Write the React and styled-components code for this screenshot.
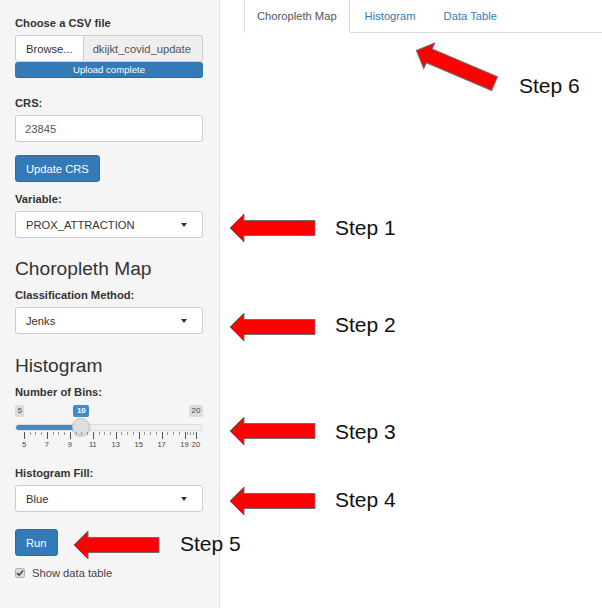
import React from "react";
import styled, { createGlobalStyle } from "styled-components";

const GlobalStyle = createGlobalStyle`
  html, body {
    margin: 0;
    padding: 0;
    background: #fff;
  }
  body {
    font-family: "Liberation Sans", Arial, Helvetica, sans-serif;
    color: #333;
  }
`;

const BLUE = "#337ab7";
const SLIDER_BLUE = "#428bca";

// slider data
const MIN = 5;
const MAX = 20;
const VALUE = 10;
const GRID_LEFT = 9;
const GRID_WIDTH = 172;
const gridX = (v) => GRID_LEFT + ((v - MIN) / (MAX - MIN)) * GRID_WIDTH;
const gridLabels = [5, 7, 9, 11, 13, 15, 17, 19, 20];
const smallTicks = [];
for (let v = 5; v < 19; v += 2) {
  smallTicks.push(v + 0.5, v + 1, v + 1.5);
}
smallTicks.push(19.25, 19.5, 19.75);

const annotations = [
  { id: 1, arrow: { x: 229, y: 213 }, text: { x: 335, y: 216 } },
  { id: 2, arrow: { x: 229, y: 312 }, text: { x: 335, y: 313 } },
  { id: 3, arrow: { x: 229, y: 416 }, text: { x: 335, y: 420 } },
  { id: 4, arrow: { x: 229, y: 486 }, text: { x: 335, y: 488 } },
  { id: 5, arrow: { x: 73, y: 530 }, text: { x: 180, y: 532 } },
  { id: 6, arrow: { x: 412, y: 52, rotate: 23 }, text: { x: 519, y: 74 } },
];

const App = () => {
  return (
    <Page>
      <GlobalStyle />
      <Sidebar>
        <Group $mb={17}>
          <Label>Choose a CSV file</Label>
          <FileRow>
            <BrowseButton>Browse...</BrowseButton>
            <FileName>dkijkt_covid_update</FileName>
          </FileRow>
          <Progress>Upload complete</Progress>
        </Group>

        <Group $mb={13}>
          <Label>CRS:</Label>
          <TextInput>23845</TextInput>
        </Group>

        <Group $mb={9}>
          <Button>Update CRS</Button>
        </Group>

        <Group $mb={20}>
          <Label>Variable:</Label>
          <Select>PROX_ATTRACTION</Select>
        </Group>

        <Heading>Choropleth Map</Heading>
        <Group $mb={21}>
          <Label>Classification Method:</Label>
          <Select>Jenks</Select>
        </Group>

        <Heading>Histogram</Heading>
        <Group $mb={14}>
          <Label>Number of Bins:</Label>
          <Slider>
            <SliderTag>{MIN}</SliderTag>
            <SliderTag $value style={{ left: gridX(VALUE) - 8 }}>
              {VALUE}
            </SliderTag>
            <SliderTag $right>{MAX}</SliderTag>
            <Track>
              <TrackFill style={{ width: gridX(VALUE) }} />
            </Track>
            <Handle style={{ left: gridX(VALUE) - 9 }} />
            {smallTicks.map((v) => (
              <Tick key={`s${v}`} style={{ left: gridX(v) }} />
            ))}
            {gridLabels.map((v) => (
              <React.Fragment key={v}>
                <Tick $big style={{ left: gridX(v) }} />
                <TickLabel style={{ left: gridX(v) }}>{v}</TickLabel>
              </React.Fragment>
            ))}
          </Slider>
        </Group>

        <Group $mb={17}>
          <Label>Histogram Fill:</Label>
          <Select>Blue</Select>
        </Group>

        <Group $mb={9}>
          <Button>Run</Button>
        </Group>

        <CheckRow>
          <CheckBox>
            <svg width="8" height="8" viewBox="0 0 8 8">
              <path d="M1 4.2 L3.1 6.2 L7 1.6" fill="none" stroke="#444" strokeWidth="1.6" />
            </svg>
          </CheckBox>
          Show data table
        </CheckRow>
      </Sidebar>

      <Main>
        <Tabs>
          <Tab $active>Choropleth Map</Tab>
          <Tab>Histogram</Tab>
          <Tab>Data Table</Tab>
        </Tabs>
      </Main>

      {annotations.map((a) => (
        <React.Fragment key={a.id}>
          <ArrowBox $x={a.arrow.x} $y={a.arrow.y} $rotate={a.arrow.rotate || 0}>
            <svg width="87" height="30" viewBox="0 0 87 30">
              <polygon
                points="1,15 15,1 15,7.5 86,7.5 86,22.5 15,22.5 15,29"
                fill="#ff0000"
                stroke="#6e6e6e"
                strokeWidth="1"
              />
            </svg>
          </ArrowBox>
          <StepText $x={a.text.x} $y={a.text.y}>
            Step {a.id}
          </StepText>
        </React.Fragment>
      ))}
    </Page>
  );
};

const Page = styled.div`
  position: relative;
  display: flex;
  width: 602px;
  height: 608px;
  overflow: hidden;
`;

const Sidebar = styled.aside`
  width: 188px;
  flex: 0 0 188px;
  padding: 15px 16px 0 15px;
  background: #f5f5f5;
  border-right: 1px solid #e3e3e3;
  display: flex;
  flex-direction: column;
`;

const Group = styled.div`
  display: flex;
  flex-direction: column;
  align-items: flex-start;
  margin-bottom: ${(p) => p.$mb || 0}px;
`;

const Label = styled.label`
  font-size: 11.2px;
  font-weight: 700;
  line-height: 16px;
  color: #333;
  margin-bottom: 4px;
`;

const FileRow = styled.div`
  display: flex;
  width: 188px;
  height: 27px;
`;

const BrowseButton = styled.div`
  box-sizing: border-box;
  height: 27px;
  padding: 0 10px;
  display: flex;
  align-items: center;
  font-size: 11.2px;
  color: #333;
  background: #fff;
  border: 1px solid #ccc;
  border-radius: 3px 0 0 3px;
`;

const FileName = styled.div`
  box-sizing: border-box;
  flex: 1;
  height: 27px;
  padding: 0 9px;
  display: flex;
  align-items: center;
  font-size: 11.2px;
  color: #555;
  background: #eee;
  border: 1px solid #ccc;
  border-left: none;
  border-radius: 0 3px 3px 0;
  overflow: hidden;
  white-space: nowrap;
`;

const Progress = styled.div`
  width: 188px;
  height: 16px;
  line-height: 16px;
  background: ${BLUE};
  color: #fff;
  font-size: 9.6px;
  text-align: center;
  border-radius: 3px;
  box-shadow: inset 0 -1px 0 rgba(0, 0, 0, 0.15);
`;

const TextInput = styled.div`
  box-sizing: border-box;
  width: 188px;
  height: 27px;
  padding: 0 9px;
  display: flex;
  align-items: center;
  font-size: 11.2px;
  color: #555;
  background: #fff;
  border: 1px solid #ccc;
  border-radius: 3px;
`;

const Select = styled(TextInput)`
  position: relative;
  padding-left: 10px;
  color: #333;
  &::after {
    content: "";
    position: absolute;
    right: 15px;
    top: 11px;
    border-top: 4px solid #333;
    border-left: 3.5px solid transparent;
    border-right: 3.5px solid transparent;
  }
`;

const Button = styled.div`
  box-sizing: border-box;
  height: 27px;
  padding: 0 10px;
  display: flex;
  align-items: center;
  font-size: 11.2px;
  color: #fff;
  background: ${BLUE};
  border: 1px solid #2e6da4;
  border-radius: 3px;
`;

const Heading = styled.h3`
  margin: 0 0 8px;
  font-size: 19.2px;
  font-weight: 400;
  line-height: 21px;
  color: #333;
`;

const Slider = styled.div`
  position: relative;
  width: 188px;
  height: 50px;
  margin-top: -3px;
`;

const SliderTag = styled.span`
  position: absolute;
  top: 4px;
  ${(p) => (p.$right ? "right: 0;" : "left: 0;")}
  height: 12px;
  line-height: 12px;
  padding: 0 2.5px;
  font-size: 8px;
  border-radius: 2px;
  color: ${(p) => (p.$value ? "#fff" : "#444")};
  background: ${(p) => (p.$value ? SLIDER_BLUE : "rgba(0, 0, 0, 0.1)")};
  font-weight: ${(p) => (p.$value ? 700 : 400)};
  box-sizing: border-box;
  min-width: ${(p) => (p.$value ? "16px" : "0")};
  text-align: center;
`;

const Track = styled.div`
  position: absolute;
  left: 0;
  right: 0;
  top: 23px;
  height: 7px;
  box-sizing: border-box;
  background: #eee;
  border: 1px solid #dcdcdc;
  border-radius: 4px;
  overflow: hidden;
`;

const TrackFill = styled.div`
  height: 100%;
  background: ${SLIDER_BLUE};
`;

const Handle = styled.div`
  position: absolute;
  top: 17px;
  width: 18px;
  height: 18px;
  box-sizing: border-box;
  border-radius: 50%;
  background: #dedede;
  border: 1px solid #c4c4c4;
  box-shadow: 0 1px 2px rgba(0, 0, 0, 0.15);
`;

const Tick = styled.span`
  position: absolute;
  top: 31px;
  width: 1px;
  height: ${(p) => (p.$big ? 7 : 3)}px;
  background: ${(p) => (p.$big ? "#555" : "#999")};
`;

const TickLabel = styled.span`
  position: absolute;
  top: 39px;
  transform: translateX(-50%);
  font-size: 7.5px;
  line-height: 10px;
  color: #444;
`;

const CheckRow = styled.label`
  display: flex;
  align-items: center;
  gap: 7px;
  height: 16px;
  font-size: 11.2px;
  color: #444;
`;

const CheckBox = styled.span`
  display: flex;
  align-items: center;
  justify-content: center;
  width: 10px;
  height: 10px;
  box-sizing: border-box;
  background: #dcdcdc;
  border: 1px solid #b5b5b5;
  border-radius: 2px;
`;

const Main = styled.main`
  flex: 1;
  background: #fff;
  padding-left: 24px;
`;

const Tabs = styled.nav`
  display: flex;
  height: 32px;
  border-bottom: 1px solid #ddd;
`;

const Tab = styled.div`
  box-sizing: border-box;
  height: 33px;
  padding: 0 12px;
  margin-right: 2px;
  display: flex;
  align-items: center;
  font-size: 11.2px;
  color: ${(p) => (p.$active ? "#555" : BLUE)};
  background: ${(p) => (p.$active ? "#fff" : "transparent")};
  border: 1px solid ${(p) => (p.$active ? "#ddd" : "transparent")};
  border-top: none;
  border-bottom-color: transparent;
`;

const ArrowBox = styled.div`
  position: absolute;
  left: ${(p) => p.$x}px;
  top: ${(p) => p.$y}px;
  width: 87px;
  height: 30px;
  transform: rotate(${(p) => p.$rotate}deg);
  svg {
    display: block;
  }
`;

const StepText = styled.span`
  position: absolute;
  left: ${(p) => p.$x}px;
  top: ${(p) => p.$y}px;
  font-size: 21px;
  line-height: 24px;
  color: #111;
  white-space: nowrap;
`;

export default App;
